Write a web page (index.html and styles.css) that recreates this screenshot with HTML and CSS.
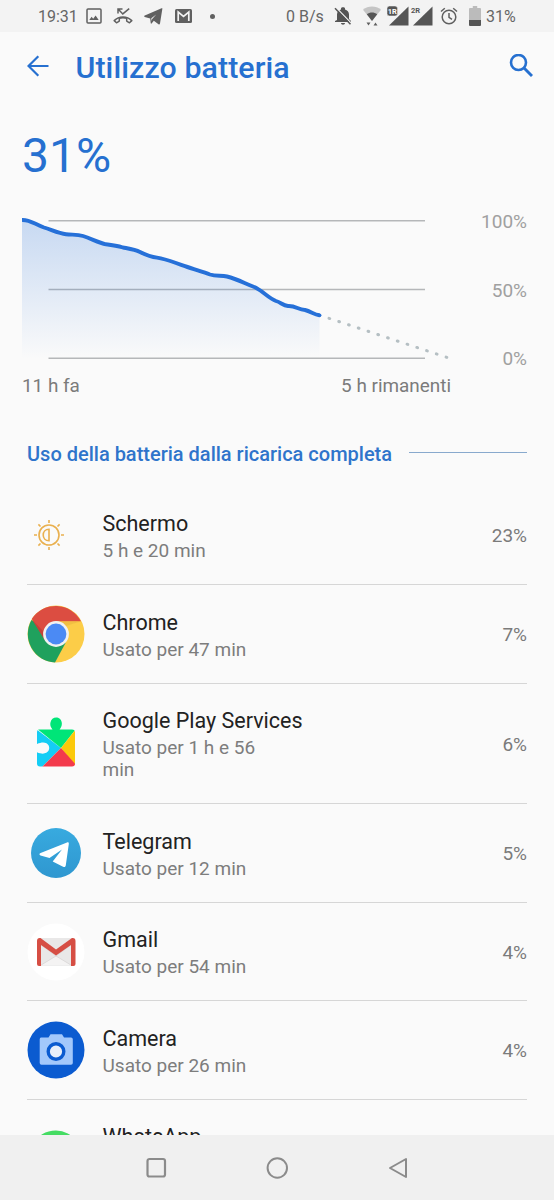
FILE: index.html
```
<!DOCTYPE html>
<html lang="it">
<head>
<meta charset="utf-8">
<title>Utilizzo batteria</title>
<link rel="stylesheet" href="styles.css">
</head>
<body>
<div class="phone">
  <header class="status">
    <span class="time">19:31</span>
    <svg class="s-image" width="16" height="16" viewBox="0 0 16 16"><rect x="1" y="1" width="14" height="14" rx="1" fill="none" stroke="#606060" stroke-width="1.5"/><path d="M3.3 12 5.6 8.8 7.2 10.7 9.6 7.6 12.7 12z" fill="#606060"/></svg>
    <svg class="s-missed" width="20" height="16" viewBox="0 0 20 16"><path d="M5 5.500V1h4.500M5.300 1.300l4.500 4.600L16.200.6" fill="none" stroke="#606060" stroke-width="1.500"/><path d="M1.200 12.600c4.800-4.800 12.800-4.800 17.600 0l-2.300 2.200-2.800-1.700v-2.700c-2.500-.8-5-.8-7.400 0v2.700l-2.800 1.700z" fill="none" stroke="#606060" stroke-width="1.500" stroke-linejoin="round"/></svg>
    <svg class="s-plane" width="19" height="17" viewBox="0 0 19 17"><path d="M18.400.5 16 15.500c-.2 1-.8 1.200-1.500.8L9.800 12.800 7.800 15.300c-.5.6-1 .5-1.100-.3L6.200 10.600.7 8.900C-.1 8.600 0 8 .8 7.600L17 .4c.7-.3 1.500-.3 1.400.1zM7.300 10.300l.3 2.600.6-2 4-4.300z" fill="#606060"/></svg>
    <svg class="s-mail" width="17" height="14" viewBox="0 0 17 14"><rect width="17" height="14" rx="1.500" fill="#606060"/><path d="M3.200 12V3L8.500 7.300 13.800 3v9" fill="none" stroke="#f3f3f3" stroke-width="1.700"/></svg>
    <i class="dot"></i>
    <span class="speed">0 B/s</span>
    <svg class="s-bell" width="18" height="20" viewBox="0 0 18 20"><path d="M3 14V8.500c0-2.500 1.700-4.300 4-4.900V2.500c0-1.600 4-1.600 4 0v1.100c2.300.6 4 2.400 4 4.900V13l2 2v1H1v-1zM7 17h4c0 2.200-4 2.200-4 0z" fill="#555"/><path d="M2.200 1.800 17.500 17.500" stroke="#f3f3f3" stroke-width="1.300"/><path d="m1 2.300 15.500 16" stroke="#555" stroke-width="1.500"/></svg>
    <svg class="s-wifi" width="18" height="20" viewBox="0 0 18 20"><path d="M0 3.700C5-.7 13-.7 18 3.700L9 15z" fill="#c5c5c5"/><path d="M3.800 8.300c3-2.500 7.400-2.500 10.400 0L9 15z" fill="#555"/><path d="M3.500 16.500h4l-2 3zM10.500 19.500h4l-2-3z" fill="#606060"/></svg>
    <svg class="s-sim1" width="22" height="20" viewBox="0 0 22 20"><path d="M21.500.5v19H2z" fill="#555"/><rect width="10.500" height="10" rx="2.500" fill="#555" stroke="#f3f3f3" stroke-width=".5"/><text class="sim" x=".7" y="7.800" fill="#fff">1R</text></svg>
    <svg class="s-sim2" width="22" height="20" viewBox="0 0 22 20"><path d="M21.500.5v19H2z" fill="#555"/><text class="sim" x="0" y="7.300" fill="#555" stroke="#f3f3f3" stroke-width="1.500" paint-order="stroke">2R</text></svg>
    <svg class="s-alarm" width="18" height="18" viewBox="0 0 18 18"><g fill="none" stroke="#606060" stroke-width="1.500"><circle cx="9" cy="10" r="6.800"/><path d="M9 6v4.300l3 2M1 4.500l3.800-3.300M17 4.500l-3.800-3.300"/></g></svg>
    <svg class="s-batt" width="12" height="20" viewBox="0 0 12 20"><path d="M1 2h2.800V0h4.400V2H11q1 0 1 1v11H0V3q0-1 1-1z" fill="#bbb"/><path d="M0 14h12v5q0 1-1 1H1q-1 0-1-1z" fill="#555"/></svg>
    <span class="pct">31%</span>
  </header>

  <nav class="bar">
    <svg width="22" height="22" viewBox="0 0 22 22"><path d="M21.500 11H2M11.300 1.200 1.500 11l9.800 9.800" fill="none" stroke="#2670d0" stroke-width="2.200"/></svg>
    <h1>Utilizzo batteria</h1>
    <svg width="24" height="24" viewBox="0 0 24 24"><circle cx="9.500" cy="8.500" r="7.500" fill="none" stroke="#2670d0" stroke-width="2.600"/><path d="m14.800 13.800 8.200 8.200" stroke="#2670d0" stroke-width="3"/></svg>
  </nav>

  <section class="summary">
    <div class="level">31%</div>
    <div class="chart">
      <svg width="440" height="150" viewBox="0 0 440 150">
        <defs><linearGradient id="fade" x1="0" y1="0" x2="0" y2="1"><stop offset="0" stop-color="#2670d8" stop-opacity=".24"/><stop offset="1" stop-color="#2670d8" stop-opacity="0"/></linearGradient></defs>
        <path d="M26.500 10.700H403M26.500 79.500H403M26.500 148.200H403" stroke="#b5b7b9" stroke-width="1.400"/>
        <path d="M0 10C8 9.500 12 14 22 17.500 30 20 37 23.500 44 24.200 50 25 55 24 61 26 70 29 77 33 84 34.300 90 35 96 36 101 37.500 109 39 113 39.500 118 42 124 45 129 47 135 47.600 145 49 153 53 163 56.200 172 59.500 180 61.500 188 64.500 194 66.500 199 65.200 205 66.500 215 69 222 73 231 76.500 241 80.500 246 88 254 91 259 92.500 261 95.500 266 96 274 95.500 276 100 283 100 289 101.500 292 104.500 297.500 105.300V149H0z" fill="url(#fade)"/>
        <path d="M0 10C8 9.500 12 14 22 17.500 30 20 37 23.500 44 24.200 50 25 55 24 61 26 70 29 77 33 84 34.300 90 35 96 36 101 37.500 109 39 113 39.500 118 42 124 45 129 47 135 47.600 145 49 153 53 163 56.200 172 59.500 180 61.500 188 64.500 194 66.500 199 65.200 205 66.500 215 69 222 73 231 76.500 241 80.500 246 88 254 91 259 92.500 261 95.500 266 96 274 95.500 276 100 283 100 289 101.500 292 104.500 297.500 105.300" fill="none" stroke="#2670d8" stroke-width="3.900"/>
        <circle cx="297.500" cy="105.300" r="1.900" fill="#2670d8"/>
        <path d="m307 108.300 118.200 39.200" fill="none" stroke="#b5bfc3" stroke-width="3" stroke-linecap="round" stroke-dasharray=".8 9.480"/>
      </svg>
      <div class="scale"><span>100%</span><span>50%</span><span>0%</span></div>
    </div>
    <div class="range"><span>11 h fa</span><span>5 h rimanenti</span></div>
  </section>

  <h2 class="section">Uso della batteria dalla ricarica completa</h2>

  <ul class="apps">
    <li>
      <div class="icon small"><svg width="30" height="30" viewBox="0 0 30 30" fill="none" stroke="#e9b04f" stroke-width="1.600"><circle cx="15" cy="15" r="10"/><path d="M15 9.200v11.600c-7.700 0-7.700-11.600 0-11.600z"/><path d="M15 0v3M15 27v3M0 15h3M27 15h3M4.400 4.400l2.100 2.100M23.500 23.500l2.100 2.100M4.400 25.600l2.100-2.100M23.500 6.500l2.100-2.100"/></svg></div>
      <div class="info"><h3>Schermo</h3><p>5 h e 20 min</p></div><span class="use">23%</span>
    </li>
    <li>
      <div class="icon"><svg width="58" height="58" viewBox="0 0 58 58"><circle cx="29" cy="29" r="28.500" fill="#fccd48"/><path d="M29 29 4.500 15A28.500 28.500 0 0 0 28 57.500L38.500 38z" fill="#1fa15d"/><path d="M4.800 14A28.500 28.500 0 0 1 54 16.200H29L18 35.500z" fill="#dc4d41"/><path d="M29 16.200H54L39 21z" fill="#e5af3d" opacity=".45"/><path d="M5.500 15.200 18 35.500 20 30z" fill="#a5372e" opacity=".45"/><circle cx="29" cy="29" r="12.900" fill="#f1f1f1"/><circle cx="29" cy="29" r="10.400" fill="#4b8af4"/></svg></div>
      <div class="info"><h3>Chrome</h3><p>Usato per 47 min</p></div><span class="use">7%</span>
    </li>
    <li class="tall">
      <div class="icon"><svg width="40" height="54" viewBox="0 0 40 54"><clipPath id="piece"><path d="M3 12.500H16.500C14.500 10 14 8.500 14.400 5.800 15.400-1.300 25-1.300 25.800 5.800 26 8.500 25.500 10 23.600 12.500H36q3 0 3 3V46.500q0 3-3 3H4q-3 0-3-3V35.200C5 37 8 37 10.300 35.800 14.300 33.400 14 28.300 10.500 26.200 8 25 5 25.200 1 27V15.500Q1 12.500 3 12.500z"/></clipPath><g clip-path="url(#piece)"><path d="M0 12v38h6l19-19z" fill="#14cdf5"/><path d="M0 11V0h40v12L25 31z" fill="#00e578"/><path d="M40 12v38L25 31z" fill="#fbc90a"/><path d="M6 50 25 31 42 50z" fill="#f33a4c"/></g></svg></div>
      <div class="info"><h3>Google Play Services</h3><p>Usato per 1 h e 56 min</p></div><span class="use">6%</span>
    </li>
    <li>
      <div class="icon"><svg width="50" height="50" viewBox="0 0 50 50"><defs><linearGradient id="tg" x1="0" y1="0" x2="0" y2="1"><stop stop-color="#38aadf"/><stop offset="1" stop-color="#2f97d0"/></linearGradient></defs><circle cx="25" cy="25" r="25" fill="url(#tg)"/><path d="M36 14.500c1.300-.5 2 .1 1.800 1.600L34.800 37.300c-.3 1.800-1.200 2.200-2.700 1.400L21.700 33.500 31 21.500 18.500 29.900 9.500 27.400c-1.500-.5-1.400-1.600.1-2.300z" fill="#fff"/></svg></div>
      <div class="info"><h3>Telegram</h3><p>Usato per 12 min</p></div><span class="use">5%</span>
    </li>
    <li class="short">
      <div class="icon"><svg width="58" height="58" viewBox="0 0 58 58"><circle cx="29" cy="29" r="28.500" fill="#fff"/><path d="M12 15h34v28H12z" fill="#e9e8e8"/><path d="M14 42.500 29 33l15 9.500z" fill="#f4f3f3"/><path d="M14 22 29 33 14 42M44 22 29 33l15 9" fill="none" stroke="#d9d7d7" stroke-width=".8"/><path d="M10 18q0-3.500 3.500-3L29 26.500 45 15q3.500-.5 3.500 3V41q0 2-2 2H44V22L29 32.500 14 22V43H12q-2 0-2-2z" fill="#d64e44"/></svg></div>
      <div class="info"><h3>Gmail</h3><p>Usato per 54 min</p></div><span class="use">4%</span>
    </li>
    <li>
      <div class="icon"><svg width="58" height="58" viewBox="0 0 58 58"><circle cx="29" cy="29" r="28.500" fill="#0b5bd0"/><path d="M14 16.500h7.500l2-3.300h11.500l2 3.300H44q1.800 0 1.800 1.800V42q0 1.800-1.800 1.800H14.500q-1.800 0-1.800-1.800V18.300q0-1.800 1.300-1.800z" fill="#a3c8fb"/><circle cx="29" cy="30.500" r="7.800" fill="#e8effa" stroke="#0b5bd0" stroke-width="3.400"/></svg></div>
      <div class="info"><h3>Camera</h3><p>Usato per 26 min</p></div><span class="use">4%</span>
    </li>
    <li class="peek">
      <div class="icon"><svg width="56" height="56" viewBox="0 0 56 56"><path d="M28 .5A27 27 0 1 1 14 51L1 55 5 42A27 27 0 0 1 28 .5z" fill="#45dc63"/></svg></div>
      <div class="info"><h3>WhatsApp</h3></div>
    </li>
  </ul>

  <footer class="keys">
    <svg width="22" height="22" viewBox="0 0 22 22"><rect x="2.500" y="2" width="17.500" height="17.500" rx="2" fill="none" stroke="#8b8b8b" stroke-width="2.200"/></svg>
    <svg width="22" height="22" viewBox="0 0 22 22"><circle cx="11.300" cy="11" r="9.700" fill="none" stroke="#8b8b8b" stroke-width="2"/></svg>
    <svg width="22" height="22" viewBox="0 0 22 22"><path d="M19 2v18L3 11z" fill="none" stroke="#8b8b8b" stroke-width="2" stroke-linejoin="round"/></svg>
  </footer>
</div>
</body>
</html>
```
FILE: styles.css
```
* { box-sizing: border-box; }
body { margin: 0; font-family: Roboto, sans-serif; background: #fafafa; }
h1, h2, h3, p, ul { margin: 0; padding: 0; font-weight: 400; }
svg { display: block; flex: none; }

.phone { height: 1200px; display: flex; flex-direction: column; overflow: hidden; }

.status {
  height: 32px; flex: none; display: flex; align-items: center; padding: 1px 0 0 38px;
  background: #f3f3f3; color: #666; font-size: 16px; white-space: nowrap;
}
.time { width: 48px; }
.s-image { margin-top: -1px; }
.s-missed { margin-left: 11px; margin-top: -1px; }
.s-plane { margin-left: 11px; }
.s-mail { margin-left: 12px; margin-top: -1px; }
.dot { width: 5px; height: 5px; border-radius: 50%; background: #606060; margin-left: 18px; }
.speed { width: 49px; margin-left: 71px; }
.s-bell { margin-left: -1px; margin-top: -1px; }
.s-wifi { margin-left: 11px; margin-top: -2px; }
.s-sim1 { margin-left: 6px; margin-top: -2px; }
.s-sim2 { margin-left: 2px; margin-top: -2px; }
.sim { font: 700 7.500px Roboto, sans-serif; }
.s-alarm { margin-left: 7px; margin-top: -1px; }
.s-batt { margin-left: 11px; margin-top: -1px; }
.pct { margin-left: 5px; }

.bar { height: 68px; flex: none; display: flex; align-items: center; padding: 0 21px 0 27px; }
.bar h1 { flex: 1; margin: 3px 0 0 26.500px; font-size: 30.300px; font-weight: 500; color: #2670d0; line-height: 36px; letter-spacing: .1px; }

.summary { height: 320px; flex: none; padding: 26px 27px 0 22px; }
.level { height: 60px; line-height: 60px; font-size: 48px; color: #2670d0; }
.chart { height: 150px; margin-top: 24px; display: flex; justify-content: space-between; }
.scale {
  flex: 1; display: flex; flex-direction: column; justify-content: space-between;
  height: 160px; padding-top: 1px; text-align: right; font-size: 19px; line-height: 22px; color: #a0a0a0;
}
.range {
  display: flex; justify-content: space-between; width: 429px; margin-top: 15px;
  font-size: 18.900px; line-height: 22px; color: #7b7b7b;
}

.section {
  height: 66px; flex: none; display: flex; align-items: center; gap: 17px; padding: 2px 27px 0;
  font-size: 20px; font-weight: 500; color: #2f74cb; white-space: nowrap;
}
.section::after { content: ""; flex: 1; height: 1px; margin-top: -3px; background: #88a9cd; }

.apps { flex: 1; min-height: 0; overflow: hidden; list-style: none; padding: 0 27px; }
.apps li { height: 99px; display: flex; align-items: center; border-bottom: 1px solid #d6d6d6; }
.apps li.tall { height: 120px; }
.apps li.short { height: 98px; }
.apps li.peek { height: 120px; align-items: flex-start; padding-top: 21px; }
.peek .icon { padding-top: 9px; }
.icon { width: 57px; flex: none; display: flex; justify-content: center; }
.icon.small { width: 43px; margin-right: 14px; }
.info { width: 210px; margin-left: 18.500px; }
.info h3 { font-size: 21.500px; line-height: 32px; color: #222; white-space: nowrap; }
.info p { width: 180px; font-size: 19px; line-height: 22px; color: #7d7d7d; }
.tall .info { margin-top: -2px; }
.short .info { margin-top: -1px; }
.use { margin-left: auto; padding-top: 1px; font-size: 19px; color: #7b7b7b; }

.keys {
  height: 65px; flex: none; display: flex; align-items: center; justify-content: center; gap: 99px;
  background: #f0f0f0;
}
```
